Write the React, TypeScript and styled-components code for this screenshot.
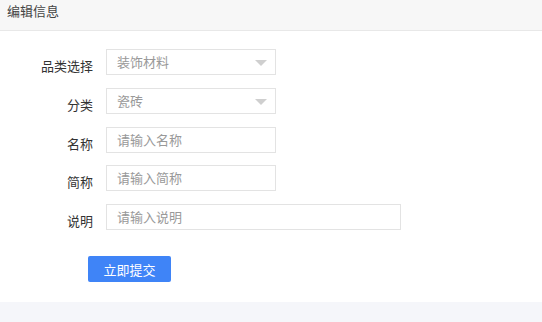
import React from "react";
import styled, { createGlobalStyle } from "styled-components";

const GlobalStyle = createGlobalStyle`
  html, body {
    margin: 0;
    padding: 0;
    background: #f5f6fa;
    font-family: "Noto Sans CJK SC", "Noto Sans", sans-serif;
  }
`;

const Header = styled.div`
  height: 30px;
  padding-left: 7px;
  line-height: 22px;
  font-size: 13px;
  color: #444;
  background: #f7f7f7;
  border-bottom: 1px solid #e8e8e8;
`;

const Body = styled.div`
  background: #fff;
  padding: 18px 0 20px;
  display: flex;
  flex-direction: column;
  gap: 12.75px;
`;

const Row = styled.div`
  display: flex;
  align-items: flex-start;
  gap: 13px;
`;

const Label = styled.label`
  width: 93px;
  text-align: right;
  font-size: 13px;
  line-height: 16px;
  padding-top: 9px;
  color: #333;
`;

const Field = styled.div<{ $width: number }>`
  position: relative;
  width: ${(p) => p.$width}px;
  height: 26px;
  box-sizing: border-box;
  border: 1px solid #e3e3e3;
  padding-left: 10px;
  font-size: 13px;
  line-height: 24px;
  color: #999;
`;

const Arrow = styled.span`
  position: absolute;
  right: 8px;
  top: 10px;
  width: 0;
  height: 0;
  border-left: 6px solid transparent;
  border-right: 6px solid transparent;
  border-top: 6px solid #cfcfcf;
`;

const Actions = styled.div`
  padding: 13px 0 0 88px;
`;

const SubmitButton = styled.button`
  width: 83px;
  height: 26px;
  border: none;
  border-radius: 2px;
  background: #3f84f7;
  color: #fff;
  font-family: inherit;
  font-size: 13px;
  padding: 0;
  cursor: pointer;
`;

const rows = [
  { label: "品类选择", value: "装饰材料", select: true, width: 170 },
  { label: "分类", value: "瓷砖", select: true, width: 170 },
  { label: "名称", value: "请输入名称", select: false, width: 170 },
  { label: "简称", value: "请输入简称", select: false, width: 170 },
  { label: "说明", value: "请输入说明", select: false, width: 295 },
];

export default function App() {
  return (
    <>
      <GlobalStyle />
      <Header>编辑信息</Header>
      <Body>
        {rows.map((r) => (
          <Row key={r.label}>
            <Label>{r.label}</Label>
            <Field $width={r.width}>
              {r.value}
              {r.select && <Arrow />}
            </Field>
          </Row>
        ))}
        <Actions>
          <SubmitButton>立即提交</SubmitButton>
        </Actions>
      </Body>
    </>
  );
}
